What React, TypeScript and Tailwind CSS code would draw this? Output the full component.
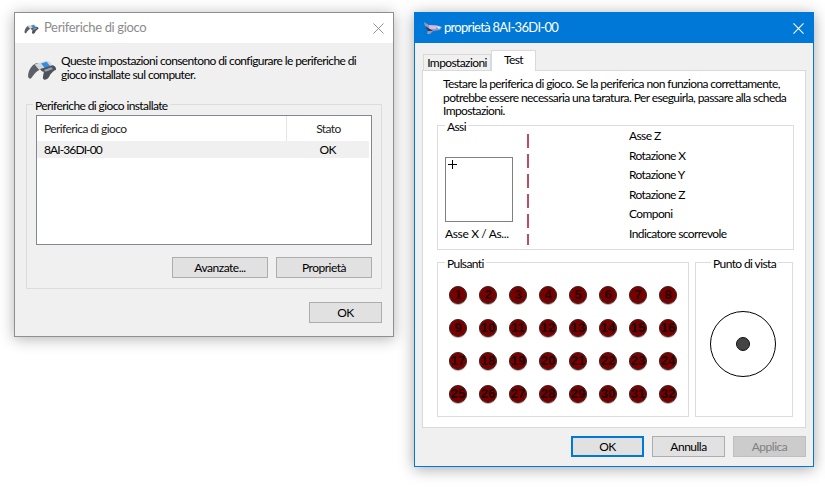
const buttons = Array.from({ length: 32 }, (_, i) => i + 1);
const axes = ["Asse Z", "Rotazione X", "Rotazione Y", "Rotazione Z", "Componi", "Indicatore scorrevole"];

function GamepadIcon({ className }: { className: string }) {
  return (
    <svg viewBox="0 0 32 24" className={className}>
      <path d="M1 21 C0 16 4 8 9 6 C12 5 14 7 14 9 L13 13 C10 14 7 18 5 21 C4 23 2 23 1 21 Z" fill="#5b6068" />
      <path d="M8 7 L20 3 C24 3 26 5 27 8 L15 13 L12 12 Z" fill="#d3d7db" />
      <path d="M15 6 L21 4 L25 9 L19 11 Z" fill="#2f8fe0" />
      <path d="M14 12 L27 8 C30 8 32 11 31 13 C28 14 27 16 25 18 C23 24 18 25 17 22 C17 19 18 17 18 15 C16 15 15 14 14 12 Z" fill="#4d535b" />
      <path d="M18 13 L26 10 L28 12 L20 15 Z" fill="#9aa1a8" />
    </svg>
  );
}

function ProductIcon() {
  return (
    <svg viewBox="0 0 20 14" className="w-5 h-[14px]">
      <path d="M1 1 L6 4 L13 4 L19 6 L17 9 L10 10 L7 13 L4 13 L5 9 L2 5 Z" fill="#8f9cc0" />
      <path d="M6 4 L14 5 L13 8 L6 8 Z" fill="#d9b8e6" />
      <path d="M2 5 L7 8 L10 10 L5 10 Z" fill="#2f3a58" />
      <path d="M13 5 L18 6 L16 8 Z" fill="#e8eef8" />
    </svg>
  );
}

function WinButton({
  label,
  className,
  primary,
  disabled,
}: {
  label: string;
  className: string;
  primary?: boolean;
  disabled?: boolean;
}) {
  return (
    <button
      className={`h-[21px] flex items-center justify-center text-xs tracking-[-0.5px] ${className} ${
        primary
          ? "border-2 border-[#0078d7] bg-[#e1e1e1] text-black"
          : disabled
            ? "border border-[#bfbfbf] bg-[#cccccc] text-[#808080]"
            : "border border-[#adadad] bg-[#e1e1e1] text-black"
      }`}
    >
      {label}
    </button>
  );
}

function GroupBox({ label, className, children, labelClass }: { label: string; className: string; labelClass: string; children?: React.ReactNode }) {
  return (
    <div className={`relative border border-[#dcdcdc] ${className}`}>
      <span className={`absolute top-[-6px] px-[2px] text-xs leading-[14px] text-black ${labelClass}`}>{label}</span>
      {children}
    </div>
  );
}

export default function App() {
  return (
    <div className="relative w-[825px] h-[487px] overflow-hidden bg-white font-['Lato','Liberation_Sans',sans-serif] text-xs tracking-[-0.6px]">
      {/* game controllers window */}
      <div className="absolute left-[14px] top-[12px] w-[380px] h-[325px] flex flex-col border border-[#8f8f8f] bg-[#f0f0f0] shadow-[0_2px_14px_rgba(0,0,0,0.3)]">
        <div className="h-[30px] shrink-0 bg-white flex items-center pl-[9px] pr-[9px]">
          <GamepadIcon className="w-[15px] h-[11px]" />
          <span className="ml-[5px] text-[13px] text-[#8c8c8c] tracking-[-0.35px]">Periferiche di gioco</span>
          <svg viewBox="0 0 12 12" className="ml-auto w-[11px] h-[11px]">
            <path d="M0.5 0.5 L11.5 11.5 M11.5 0.5 L0.5 11.5" stroke="#8a8a8a" strokeWidth="1" />
          </svg>
        </div>
        <div className="flex items-start pl-[12px] pt-[11px] h-[48px]">
          <GamepadIcon className="w-[30px] h-[22px] mt-[4px]" />
          <p className="ml-[4px] text-black leading-[14px] whitespace-nowrap">
            Queste impostazioni consentono di configurare le periferiche di
            <br />
            gioco installate sul computer.
          </p>
        </div>
        <GroupBox label="Periferiche di gioco installate" className="mx-[11px] mt-[13px] h-[185px] px-[9px] pt-[10px]" labelClass="left-[6px] bg-[#f0f0f0]">
          <div className="h-[130px] border border-[#828790] bg-white">
            <div className="flex h-[25px] items-center text-[#1f1f1f]">
              <span className="w-[250px] h-full flex items-center pl-[7px] border-r border-[#e5e5e5]">Periferica di gioco</span>
              <span className="w-[83px] text-center">Stato</span>
            </div>
            <div className="flex h-[17px] items-center bg-[#f0f0f0] mr-[2px] text-black">
              <span className="w-[250px] pl-[7px] tracking-[-0.9px]">8AI-36DI-00</span>
              <span className="w-[83px] text-center">OK</span>
            </div>
          </div>
          <div className="flex justify-end gap-2 mt-[12px]">
            <WinButton label="Avanzate..." className="w-[96px]" />
            <WinButton label="Proprietà" className="w-[96px]" />
          </div>
        </GroupBox>
        <div className="flex justify-end pr-[11px] mt-[13px]">
          <WinButton label="OK" className="w-[73px]" />
        </div>
      </div>

      {/* device properties window */}
      <div className="absolute left-[414px] top-[12px] w-[400px] h-[455px] flex flex-col border border-[#0078d7] bg-[#f0f0f0] shadow-[0_2px_14px_rgba(0,0,0,0.35)]">
        <div className="h-[30px] shrink-0 bg-[#0078d7] flex items-center pl-[8px] pr-[9px] text-white">
          <ProductIcon />
          <span className="ml-[1px] text-[13px] tracking-[-0.7px]">proprietà 8AI-36DI-00</span>
          <svg viewBox="0 0 12 12" className="ml-auto w-[11px] h-[11px]">
            <path d="M0.5 0.5 L11.5 11.5 M11.5 0.5 L0.5 11.5" stroke="#ffffff" strokeWidth="1.2" />
          </svg>
        </div>
        <div className="flex pl-[8px] h-[27px] items-end">
          <div className="w-[68px] h-[16px] flex items-center justify-center border border-b-0 border-[#d9d9d9] bg-[#f0f0f0] text-black">Impostazioni</div>
          <div className="w-[45px] h-[21px] flex items-start justify-center pt-[1px] border border-b-0 border-[#d9d9d9] bg-white text-black -mb-[1px] relative z-10">Test</div>
        </div>
        <div className="mx-[7px] h-[358px] border border-[#d9d9d9] bg-white pl-[14px] pr-[11px]">
          <p className="pl-[6px] pt-[6px] leading-[13.5px] text-black whitespace-nowrap">
            Testare la periferica di gioco. Se la periferica non funziona correttamente,
            <br />
            potrebbe essere necessaria una taratura. Per eseguirla, passare alla scheda
            <br />
            Impostazioni.
          </p>
          <GroupBox label="Assi" className="mt-[7px] h-[125px] flex" labelClass="left-[7px] bg-white">
            <div className="w-[89px] pl-[7px] pt-[31px] shrink-0">
              <div className="relative w-[68px] h-[65px] border border-[#7f7f7f]">
                <span className="absolute left-[2px] top-[2px] w-[10px] h-[10px]">
                  <span className="absolute left-0 top-[4px] w-[9px] h-px bg-black" />
                  <span className="absolute left-[4px] top-0 w-px h-[9px] bg-black" />
                </span>
              </div>
              <div className="mt-[4px] text-black whitespace-nowrap tracking-[-0.35px]">Asse X / As...</div>
            </div>
            <svg className="w-[3px] h-[111px] mt-[8px] shrink-0" viewBox="0 0 3 111">
              <line x1="1" y1="0" x2="1" y2="111" stroke="#a8132a" strokeWidth="1.5" strokeDasharray="14 6" />
            </svg>
            <div className="ml-[99px] pt-[1px] text-black">
              {axes.map((a) => (
                <div key={a} className="h-[19.5px] flex items-center">{a}</div>
              ))}
            </div>
          </GroupBox>
          <div className="flex gap-[6px] mt-[12px]">
            <GroupBox label="Pulsanti" className="w-[252px] h-[155px] pl-[11px] pt-[23px]" labelClass="left-[7px] bg-white">
              <div className="grid grid-cols-[repeat(8,18px)] auto-rows-[18px] gap-x-[12px] gap-y-[15px]">
                {buttons.map((n) => (
                  <div
                    key={n}
                    className="w-[18px] h-[18px] rounded-full bg-[#7a0000] border border-[#3a2020] shadow-[0_1px_0_#c9a9a9] flex items-center justify-center font-['Liberation_Sans'] font-bold text-[13px] tracking-[0px] leading-none text-[#1f0404] overflow-hidden"
                  >
                    {n}
                  </div>
                ))}
              </div>
            </GroupBox>
            <GroupBox label="Punto di vista" className="w-[98px] h-[155px] pt-[10px] pr-[2px] flex items-center justify-center" labelClass="left-[15px] bg-white whitespace-nowrap">
              <div className="w-[66px] h-[66px] rounded-full border border-black flex items-center justify-center">
                <div className="w-[14px] h-[14px] rounded-full bg-[#444444] border border-[#111111]" />
              </div>
            </GroupBox>
          </div>
        </div>
        <div className="flex justify-end gap-[8px] pr-[7px] mt-[8px]">
          <WinButton label="OK" className="w-[73px]" primary />
          <WinButton label="Annulla" className="w-[73px]" />
          <WinButton label="Applica" className="w-[73px]" disabled />
        </div>
      </div>
    </div>
  );
}
